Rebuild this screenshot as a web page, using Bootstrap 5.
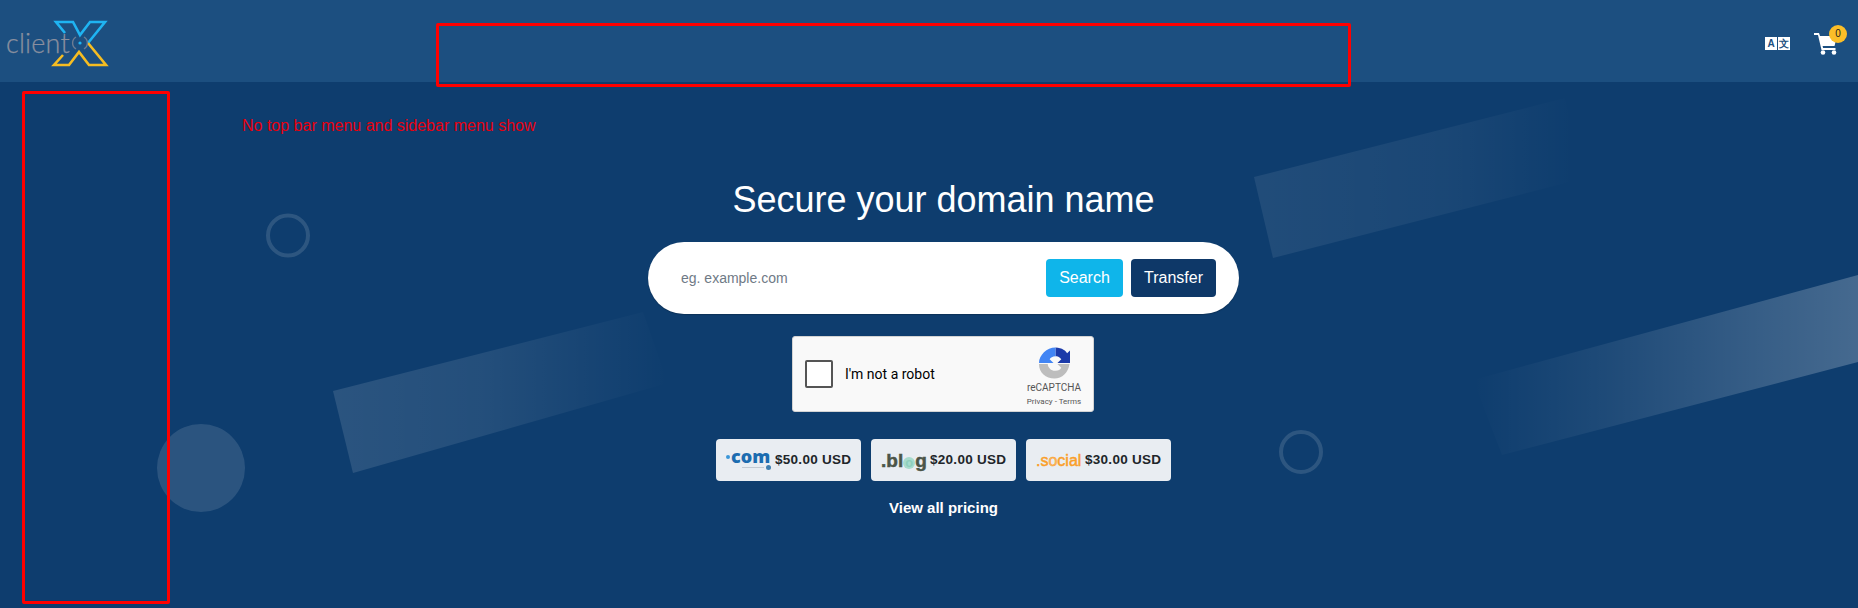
<!DOCTYPE html>
<html lang="en">
<head>
<meta charset="utf-8">
<title>Secure your domain name</title>
<link rel="stylesheet" href="https://cdn.jsdelivr.net/npm/bootstrap@5.3.0/dist/css/bootstrap.min.css">
<style>
html,body{height:608px;overflow:hidden}
body{background:#0e3d6e;font-family:"Liberation Sans",Arial,sans-serif;color:#fff}
.topbar{height:82px;background:#1c4f80;padding:0 20px 0 6px}
.brand{position:relative;width:104px;height:60px}
.brand-word{font-family:Lato,"Open Sans",sans-serif;font-weight:300;font-size:27px;letter-spacing:.2px;color:#8a8f9f;-webkit-text-stroke:.25px #8a8f9f;line-height:1;position:absolute;left:0;top:18px}
.brand-x{position:absolute;left:-6px;top:-11px}
.lang-tile{width:12px;height:13px;background:#fff;color:#1c4f80;font-size:10px;font-weight:700;line-height:13px;text-align:center;display:block}
.lang-pair{gap:1px;margin-right:24px;margin-top:5px}
.cart-wrap{position:relative;width:24px;height:22px;margin-top:6px}
.cart-wrap svg{display:block}
.cart-count{position:absolute;left:15px;top:-8px;width:18px;height:18px;border-radius:50%;background:#fbbe28;color:#222;font-size:10px;line-height:18px;text-align:center}
.stage{position:relative;height:526px;overflow:hidden}
.scenery{position:absolute;left:0;top:0;width:1858px;height:526px}
.hero{position:relative;width:591px;margin-left:648px;padding-top:96px}
.hero-title{font-size:36px;line-height:43px;font-weight:400;margin:0 0 21px;text-align:center;width:100%;white-space:nowrap}
.search-pill{width:591px;height:72px;border-radius:36px;background:#fff;padding:0 23px 0 33px;box-shadow:0 1px 1px rgba(0,0,0,.2)}
.search-pill .form-control{border:0;padding:0;font-size:14px;box-shadow:none;background:transparent;margin-top:1px;font-family:"Liberation Sans",Arial,sans-serif;min-width:0}
.search-pill .form-control::placeholder{color:#6f7a86}
.act{height:38px;font-size:16px;border-radius:4px;color:#fff;border:0;padding:0;line-height:38px;flex:0 0 auto}
.act-search{width:77px;background:#0fb5ea}
.act-search:hover{background:#0fb5ea;color:#fff}
.act-transfer{width:85px;background:#0e3868}
.act-transfer:hover{background:#0e3868;color:#fff}
.captcha{width:302px;height:76px;margin:22px 1px 0 0;background:#f9f9f9;border:1px solid #d3d3d3;border-radius:3px;color:#000;position:relative;padding-left:12px;font-family:Roboto,sans-serif}
.captcha-box{width:28px;height:28px;background:#fff;border:2px solid #555;border-radius:2px;margin-right:12px}
.captcha-label{font-size:14px}
.captcha-side{position:absolute;right:11px;top:10px;width:56px;text-align:center;color:#555}
.captcha-side svg{display:block;margin:0 auto}
.captcha-name{font-size:10px;line-height:12px;margin-top:3px;white-space:nowrap}
.captcha-links{font-size:8px;line-height:11px;margin-top:2px;white-space:nowrap;margin-left:-4px;margin-right:-4px}
.tld-row{gap:10px;margin-top:27px}
.tld{width:145px;height:42px;background:#e9edf2;border-radius:4px;color:#212529;font-weight:700;font-size:13.5px;letter-spacing:.28px;white-space:nowrap;padding:0 0 0 10px}
.tld-price{margin-left:4px;position:relative}
.logo-com,.logo-blog,.logo-social{display:block;width:45px;flex:0 0 45px;letter-spacing:0;line-height:1;position:relative}
.logo-com{font-family:"Open Sans","Liberation Sans",sans-serif;font-size:18px;font-weight:800;color:#1c6cb0;padding-left:5px;margin-top:-9px}
.logo-com-dot{position:absolute;left:0;top:8px;width:4px;height:4px;background:#3b96d8;border-radius:50%}
.logo-com-sub{position:absolute;left:16px;top:20px;width:22px;height:1px;background:#c3cad2}
.logo-com-seal{position:absolute;left:40px;top:18px;width:5px;height:5px;border-radius:50%;background:#3f7fb0}
.logo-blog{font-size:19px;font-weight:700;color:#4c5548;-webkit-text-stroke:.5px #4c5548;margin-top:1px;white-space:nowrap}
.logo-blog i{font-style:normal;color:#8fcfbd;-webkit-text-stroke:0;background:#a7dccd;border-radius:50%;display:inline-block;width:12px;height:12px;line-height:11px;font-size:13px;text-align:center;vertical-align:baseline}
.logo-social{font-size:16px;font-weight:400;color:#fa9f2a;-webkit-text-stroke:.5px #fa9f2a;margin-top:2px}
.logo-social i{font-style:normal;color:#fbb765}
.all-prices{display:block;color:#fff;font-weight:700;font-size:15px;text-align:center;margin-top:16px;text-decoration:none}
.all-prices:hover{color:#fff}
.mark-box{position:absolute;border:3px solid #f00;border-radius:2px;pointer-events:none}
.mark-top{left:436px;top:23px;width:915px;height:64px}
.mark-side{left:22px;top:91px;width:148px;height:513px}
.mark-note{position:absolute;left:242px;top:117px;color:#e8000e;font-size:16px;line-height:18px;white-space:nowrap}
</style>
</head>
<body>
<header class="topbar d-flex align-items-center justify-content-between">
  <a class="brand d-block text-decoration-none" href="#">
    <span class="brand-word">client</span>
    <svg class="brand-x" width="120" height="80" viewBox="0 0 120 80" fill="none" aria-hidden="true">
      <polyline points="65,33 56,22 73,22 80,35 90,22 105,22 88,43" stroke="#1fb4f2" stroke-width="2.6"/>
      <polyline points="63,55 54,65 69,65 79,52 89,65 106,65 88,43" stroke="#f5bd22" stroke-width="2.6"/>
      <circle cx="80" cy="43" r="1.6" fill="#1fb4f2"/>
      <path d="M76 37a7 7 0 0 0 0 12M84 37a7 7 0 0 1 0 12" stroke="#6e7c92" stroke-width="1.4"/>
    </svg>
  </a>
  <div class="d-flex align-items-center">
    <div class="lang-pair d-flex"><span class="lang-tile">A</span><span class="lang-tile">文</span></div>
    <div class="cart-wrap">
      <svg width="24" height="22" viewBox="0 0 24 22" aria-hidden="true">
        <path d="M0 0h5l1 3h17l-2.500 10H8.600l.5 2h12.400v2H7.500L4 2H0z" fill="#fff"/>
        <circle cx="9" cy="19.500" r="2.300" fill="#fff"/><circle cx="20" cy="19.500" r="2.300" fill="#fff"/>
      </svg>
      <span class="cart-count">0</span>
    </div>
  </div>
</header>
<main class="stage">
  <svg class="scenery" viewBox="0 0 1858 526" aria-hidden="true">
    <defs>
      <linearGradient id="fadeA" x1="333" y1="0" x2="668" y2="0" gradientUnits="userSpaceOnUse"><stop offset="0" stop-color="#fff" stop-opacity=".12"/><stop offset=".45" stop-color="#fff" stop-opacity=".09"/><stop offset="1" stop-color="#fff" stop-opacity="0"/></linearGradient>
      <linearGradient id="fadeB" x1="1254" y1="0" x2="1575" y2="0" gradientUnits="userSpaceOnUse"><stop offset="0" stop-color="#fff" stop-opacity=".08"/><stop offset=".6" stop-color="#fff" stop-opacity=".05"/><stop offset="1" stop-color="#fff" stop-opacity="0"/></linearGradient>
      <linearGradient id="fadeC" x1="1473" y1="0" x2="1858" y2="0" gradientUnits="userSpaceOnUse"><stop offset="0" stop-color="#fff" stop-opacity="0"/><stop offset=".35" stop-color="#fff" stop-opacity=".07"/><stop offset=".7" stop-color="#fff" stop-opacity=".16"/><stop offset="1" stop-color="#fff" stop-opacity=".23"/></linearGradient>
    </defs>
    <polygon points="333,309 643,230 668,301 353,391" fill="url(#fadeA)"/>
    <polygon points="1254,95 1565,16 1585,96 1273,176" fill="url(#fadeB)"/>
    <polygon points="1473,298 1858,193 1858,280 1502,373" fill="url(#fadeC)"/>
    <circle cx="288" cy="153.500" r="20" fill="none" stroke="#fff" stroke-opacity=".13" stroke-width="4"/>
    <circle cx="1301" cy="370" r="20" fill="none" stroke="#fff" stroke-opacity=".13" stroke-width="4"/>
    <circle cx="201" cy="386" r="44" fill="#fff" fill-opacity=".12"/>
  </svg>
  <section class="hero d-flex flex-column align-items-center">
    <h1 class="hero-title">Secure your domain name</h1>
    <form class="search-pill d-flex align-items-center gap-2" onsubmit="return false">
      <input class="form-control flex-grow-1" type="text" placeholder="eg. example.com" aria-label="Domain">
      <button class="btn act act-search" type="submit">Search</button>
      <button class="btn act act-transfer" type="button">Transfer</button>
    </form>
    <div class="captcha d-flex align-items-center">
      <span class="captcha-box d-block"></span>
      <span class="captcha-label">I'm not a robot</span>
      <div class="captcha-side">
        <svg width="31" height="32" viewBox="0 0 32 32" aria-hidden="true">
          <path d="M17 0C24 0 28 4 29 6l3-3v13H19l4-4c-2-2.500-4-3-6-3z" fill="#1c3aa9"/>
          <path d="M17 0v9c-3 0-5 1.500-6 3l4 4H0C0 8 8 0 17 0z" fill="#4285f4"/>
          <path d="M0 17h9c.5 4 3 7 8 7 3 0 5-1 6-3l-4-4h12.500C30 26 24 32 16 32 7 32 0 26 0 17z" fill="#bdbdbd"/>
        </svg>
        <div class="captcha-name">reCAPTCHA</div>
        <div class="captcha-links">Privacy - Terms</div>
      </div>
    </div>
    <div class="tld-row d-flex">
      <a class="tld d-flex align-items-center text-decoration-none" href="#"><span class="logo-com"><span class="logo-com-dot"></span>com<span class="logo-com-sub"></span><span class="logo-com-seal"></span></span><span class="tld-price">$50.00 USD</span></a>
      <a class="tld d-flex align-items-center text-decoration-none" href="#"><span class="logo-blog">.bl<i>o</i>g</span><span class="tld-price">$20.00 USD</span></a>
      <a class="tld d-flex align-items-center text-decoration-none" href="#"><span class="logo-social">.s<i>o</i>cial</span><span class="tld-price">$30.00 USD</span></a>
    </div>
    <a class="all-prices" href="#">View all pricing</a>
  </section>
</main>
<div class="mark-box mark-top"></div>
<div class="mark-box mark-side"></div>
<div class="mark-note">No top bar menu and sidebar menu show</div>
<script src="https://cdn.jsdelivr.net/npm/bootstrap@5.3.0/dist/js/bootstrap.bundle.min.js"></script>
</body>
</html>
